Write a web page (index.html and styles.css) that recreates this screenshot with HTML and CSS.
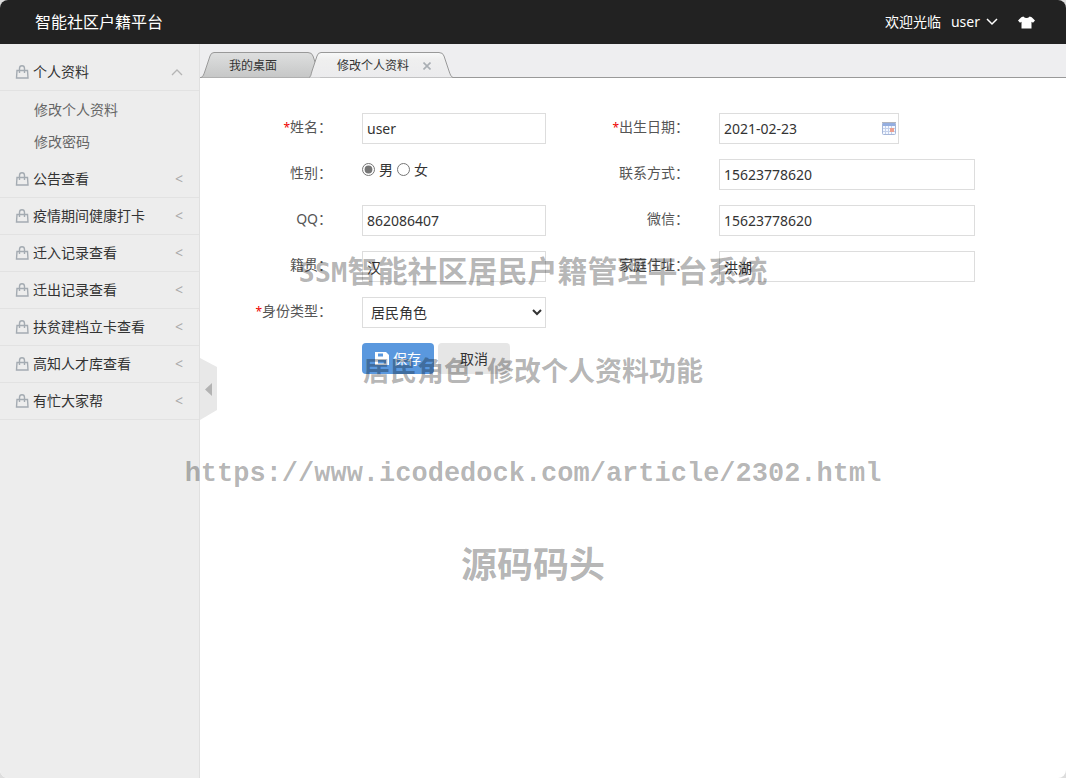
FILE: index.html
```html
<!DOCTYPE html>
<html lang="zh-CN">
<head>
<meta charset="utf-8">
<meta name="viewport" content="width=device-width, initial-scale=1">
<title>智能社区户籍平台</title>
<link rel="stylesheet" href="styles.css">
</head>
<body>
<svg class="symbols" aria-hidden="true">
  <symbol id="bag" viewBox="0 0 14 14"><path d="M2 5.500h10.500l.5 7.500H1.500zM4.500 8V3.500a2.500 2.700 0 0 1 5 0V8" fill="none" stroke="#a4abb2" stroke-width="1.400"/></symbol>
</svg>
<div class="app">
  <header class="header">
    <h1 class="brand">智能社区户籍平台</h1>
    <div class="user-bar">
      <span>欢迎光临</span>
      <button class="user-menu" type="button">user
        <svg width="12" height="8" viewBox="0 0 12 8" aria-hidden="true"><path d="M1 1l5 5 5-5" fill="none" stroke="#fff" stroke-width="1.500"/></svg>
      </button>
      <button class="skin" type="button" aria-label="换肤">
        <svg width="17" height="13" viewBox="0 0 17 13" aria-hidden="true"><path d="M5.300 .5Q8.500 3.500 11.700 .5l2 .7L17 4.500l-2 2.300-1.500-1V12.500h-10V5.800l-1.500 1L0 4.500l3.300-3.300z" fill="#fff"/></svg>
      </button>
    </div>
  </header>
  <div class="body">
    <nav class="sidebar">
      <button class="menu-item" type="button"><svg class="bag"><use href="#bag"/></svg><span class="menu-text">个人资料</span><svg class="up" width="12" height="7" viewBox="0 0 12 7" aria-hidden="true"><path d="M1 6l5-5 5 5" fill="none" stroke="#b5b5b5" stroke-width="1.300"/></svg></button>
      <ul class="submenu">
        <li><a href="#">修改个人资料</a></li>
        <li><a href="#">修改密码</a></li>
      </ul>
      <button class="menu-item" type="button"><svg class="bag"><use href="#bag"/></svg><span class="menu-text">公告查看</span><span class="arrow">&lt;</span></button>
      <button class="menu-item" type="button"><svg class="bag"><use href="#bag"/></svg><span class="menu-text">疫情期间健康打卡</span><span class="arrow">&lt;</span></button>
      <button class="menu-item" type="button"><svg class="bag"><use href="#bag"/></svg><span class="menu-text">迁入记录查看</span><span class="arrow">&lt;</span></button>
      <button class="menu-item" type="button"><svg class="bag"><use href="#bag"/></svg><span class="menu-text">迁出记录查看</span><span class="arrow">&lt;</span></button>
      <button class="menu-item" type="button"><svg class="bag"><use href="#bag"/></svg><span class="menu-text">扶贫建档立卡查看</span><span class="arrow">&lt;</span></button>
      <button class="menu-item" type="button"><svg class="bag"><use href="#bag"/></svg><span class="menu-text">高知人才库查看</span><span class="arrow">&lt;</span></button>
      <button class="menu-item" type="button"><svg class="bag"><use href="#bag"/></svg><span class="menu-text">有忙大家帮</span><span class="arrow">&lt;</span></button>
    </nav>
    <main class="main">
      <div class="tabs">
        <div class="tab tab-home">
          <svg class="tab-shape" viewBox="0 0 120 26" preserveAspectRatio="none" aria-hidden="true">
            <defs><linearGradient id="g1" x1="0" y1="0" x2="0" y2="1"><stop offset="0" stop-color="#dedfdf"/><stop offset="1" stop-color="#c6c7c7"/></linearGradient></defs>
            <path d="M0 25.500C2 25 3 22 4 19L9 4Q10 .5 13 .5H107Q111 .5 112 4L117 19C118 22 118 25 120 25.500" fill="url(#g1)" stroke="#999"/>
          </svg>
          <button class="tab-label" type="button">我的桌面</button>
        </div>
        <div class="tab tab-current">
          <svg class="tab-shape" viewBox="0 0 144 26" preserveAspectRatio="none" aria-hidden="true">
            <defs><linearGradient id="g2" x1="0" y1="0" x2="0" y2="1"><stop offset="0" stop-color="#f8f9f9"/><stop offset=".3" stop-color="#efefef"/><stop offset="1" stop-color="#ebebed"/></linearGradient></defs>
            <path d="M0 25.500C2 25 2 22 3 19L8 4Q9 .5 12 .5H130Q134 .5 135 4L140 19C141 22 142 25 144 25.500" fill="url(#g2)" stroke="#999"/>
          </svg>
          <button class="tab-label" type="button">修改个人资料</button>
          <button class="tab-close" type="button" aria-label="关闭"><svg width="8" height="8" viewBox="0 0 8 8" aria-hidden="true"><path d="M.5 .5l7 7M7.500 .5l-7 7" stroke="#a9aeb3" stroke-width="1.600"/></svg></button>
        </div>
      </div>
      <form class="form">
        <label class="label" for="name"><span class="req">*</span>姓名：</label>
        <input class="input" id="name" type="text" value="user">
        <label class="label" for="birth"><span class="req">*</span>出生日期：</label>
        <div class="date">
          <input class="input" id="birth" type="text" value="2021-02-23">
          <svg class="calendar" width="14" height="13" viewBox="0 0 14 13" aria-hidden="true"><rect x=".5" y=".5" width="13" height="12" rx="1" fill="#f4f8ff" stroke="#a5b6d8"/><path d="M1 1h12v3H1z" fill="#94aee0"/><path d="M1 6.500h12M1 9.500h12M3.500 4v8M6.500 4v8M9.500 4v8" stroke="#c3d0ea"/><path d="M8 6h4v4H8z" fill="#eba091"/><path d="M0 0h14v1H0z" fill="#b1b4bd"/></svg>
        </div>

        <span class="label" id="sex">性别：</span>
        <div class="radios" role="radiogroup" aria-labelledby="sex">
          <label class="radio"><input type="radio" name="sex" checked>男</label>
          <label class="radio"><input type="radio" name="sex">女</label>
        </div>
        <label class="label" for="phone">联系方式：</label>
        <input class="input" id="phone" type="text" value="15623778620">

        <label class="label" for="qq">QQ：</label>
        <input class="input" id="qq" type="text" value="862086407">
        <label class="label" for="wechat">微信：</label>
        <input class="input" id="wechat" type="text" value="15623778620">

        <label class="label" for="origin">籍贯：</label>
        <input class="input" id="origin" type="text" value="汉">
        <label class="label" for="address">家庭住址：</label>
        <input class="input" id="address" type="text" value="洪湖">

        <label class="label" for="role"><span class="req">*</span>身份类型：</label>
        <select class="input select" id="role"><option>居民角色</option></select>

        <div class="actions">
          <button class="btn btn-save" type="submit"><svg width="14" height="13" viewBox="0 0 14 13" aria-hidden="true"><path d="M0 0h11l3 3v10H0z" fill="#fff"/><path d="M3 1.500h5v3H3zM3 8h8v3.500H3z" fill="#5a98de"/><path d="M8.500 1v4" stroke="#fff"/></svg>保存</button>
          <button class="btn btn-cancel" type="button">取消</button>
        </div>
      </form>
    </main>
  </div>
  <button class="collapse" type="button" aria-label="收起菜单"><svg width="17" height="62" viewBox="0 0 17 62" aria-hidden="true"><path d="M0 0l17 9v43L0 62z" fill="#e8e8e8"/><path d="M12 25v13l-7-6.500z" fill="#b3b3b3"/></svg></button>
  <div class="watermark">
    <p class="mark mark-large"><span class="mark-latin">SSM</span>智能社区居民户籍管理平台系统</p>
    <p class="mark">居民角色-修改个人资料功能</p>
    <p class="mark mark-url">https://www.icodedock.com/article/2302.html</p>
    <p class="mark mark-name">源码码头</p>
  </div>
</div>
</body>
</html>
```
FILE: styles.css
```css
* { box-sizing: border-box; }

body {
  margin: 0;
  background: #ddd;
  color: #333;
  font: 14px/20px "Noto Sans", "Noto Sans CJK SC", sans-serif;
}

button, input, select { font: inherit; color: inherit; }
button { margin: 0; padding: 0; border: 0; background: none; cursor: pointer; }
svg { display: block; flex: none; }
.symbols { position: absolute; width: 0; height: 0; }

.app {
  position: relative;
  display: flex;
  flex-direction: column;
  min-height: 100vh;
  overflow: hidden;
  border-radius: 8px;
  background: #fff;
}

.header {
  display: flex;
  align-items: center;
  justify-content: space-between;
  height: 44px;
  padding: 0 31px 0 35px;
  background: #222;
  color: #fff;
}
.brand { margin: 0; font-size: 16px; font-weight: 400; }
.user-bar { display: flex; align-items: center; gap: 10px; }
.user-menu { display: flex; align-items: center; gap: 6px; }
.skin { margin-left: 10px; }

.body { display: flex; flex: 1; }

.sidebar {
  flex: none;
  width: 200px;
  padding-top: 10px;
  border-right: 1px solid #e0e0e0;
  background: #ededed;
}
.menu-item {
  display: flex;
  align-items: center;
  width: 100%;
  height: 37px;
  padding: 0 16px 0 15px;
  border-bottom: 1px solid #e2e2e2;
  text-align: left;
}
.bag { width: 14px; height: 14px; margin-right: 4px; }
.menu-text { flex: 1; }
.arrow { color: #aaa; font-size: 14px; }
.submenu { margin: 0; padding: 3px 0; list-style: none; }
.submenu a {
  display: block;
  padding-left: 34px;
  color: #666;
  line-height: 32px;
  text-decoration: none;
}

.main { flex: 1; min-width: 0; }
.tabs {
  display: flex;
  align-items: flex-end;
  height: 34px;
  padding-left: 1px;
  border-bottom: 1px solid #999;
  background: #eeeef0;
  font-size: 12px;
}
.tab {
  position: relative;
  display: flex;
  align-items: center;
  height: 26px;
  margin-bottom: -1px;
  padding: 2px 0 0 28px;
}
.tab-home { width: 120px; }
.tab-current { width: 144px; margin-left: -12px; gap: 14px; }
.tab-shape { position: absolute; inset: 0; width: 100%; height: 100%; }
.tab-label, .tab-close { position: relative; }

.form {
  display: grid;
  grid-template-columns: 132fr 184fr 113fr 256fr;
  gap: 15px 30px;
  padding: 35px 91px 35px 0;
}
.label { color: #555; line-height: 28px; text-align: right; white-space: nowrap; }
.req { color: #e00; font-size: 12px; }
.input {
  width: 100%;
  min-width: 0;
  height: 31px;
  padding: 0 4px;
  border: 1px solid #ddd;
  border-radius: 0;
  background: #fff;
}
.date { position: relative; width: 180px; }
.calendar { position: absolute; top: 9px; right: 3px; }
.radios { display: flex; gap: 4px; height: 21px; }
.radio { display: flex; align-items: center; gap: 4px; }
.radio input { width: 13px; height: 13px; margin: 0; accent-color: #767676; }
.actions { display: flex; gap: 4px; grid-column: 2 / -1; grid-row: 6; }
.btn {
  display: flex;
  align-items: center;
  justify-content: center;
  gap: 4px;
  width: 72px;
  height: 31px;
  border-radius: 4px;
}
.btn-save { background: #5a98de; color: #fff; }
.btn-cancel { background: #e6e6e6; }

.collapse { position: absolute; top: 50%; left: 200px; margin-top: -31px; }

.watermark {
  position: absolute;
  top: 223px;
  left: 0;
  right: 0;
  color: rgba(0, 0, 0, 0.3);
  font-family: "Liberation Mono", "Noto Sans CJK SC", monospace;
  font-weight: 700;
  text-align: center;
  pointer-events: none;
}
.mark { margin: 0; font-size: 27px; line-height: 100px; white-space: nowrap; }
.mark-large { font-size: 30px; }
.mark-latin { font-family: "DejaVu Sans Mono", monospace; font-size: 27px; }
.mark-name { font-size: 36px; line-height: 90px; }
```
